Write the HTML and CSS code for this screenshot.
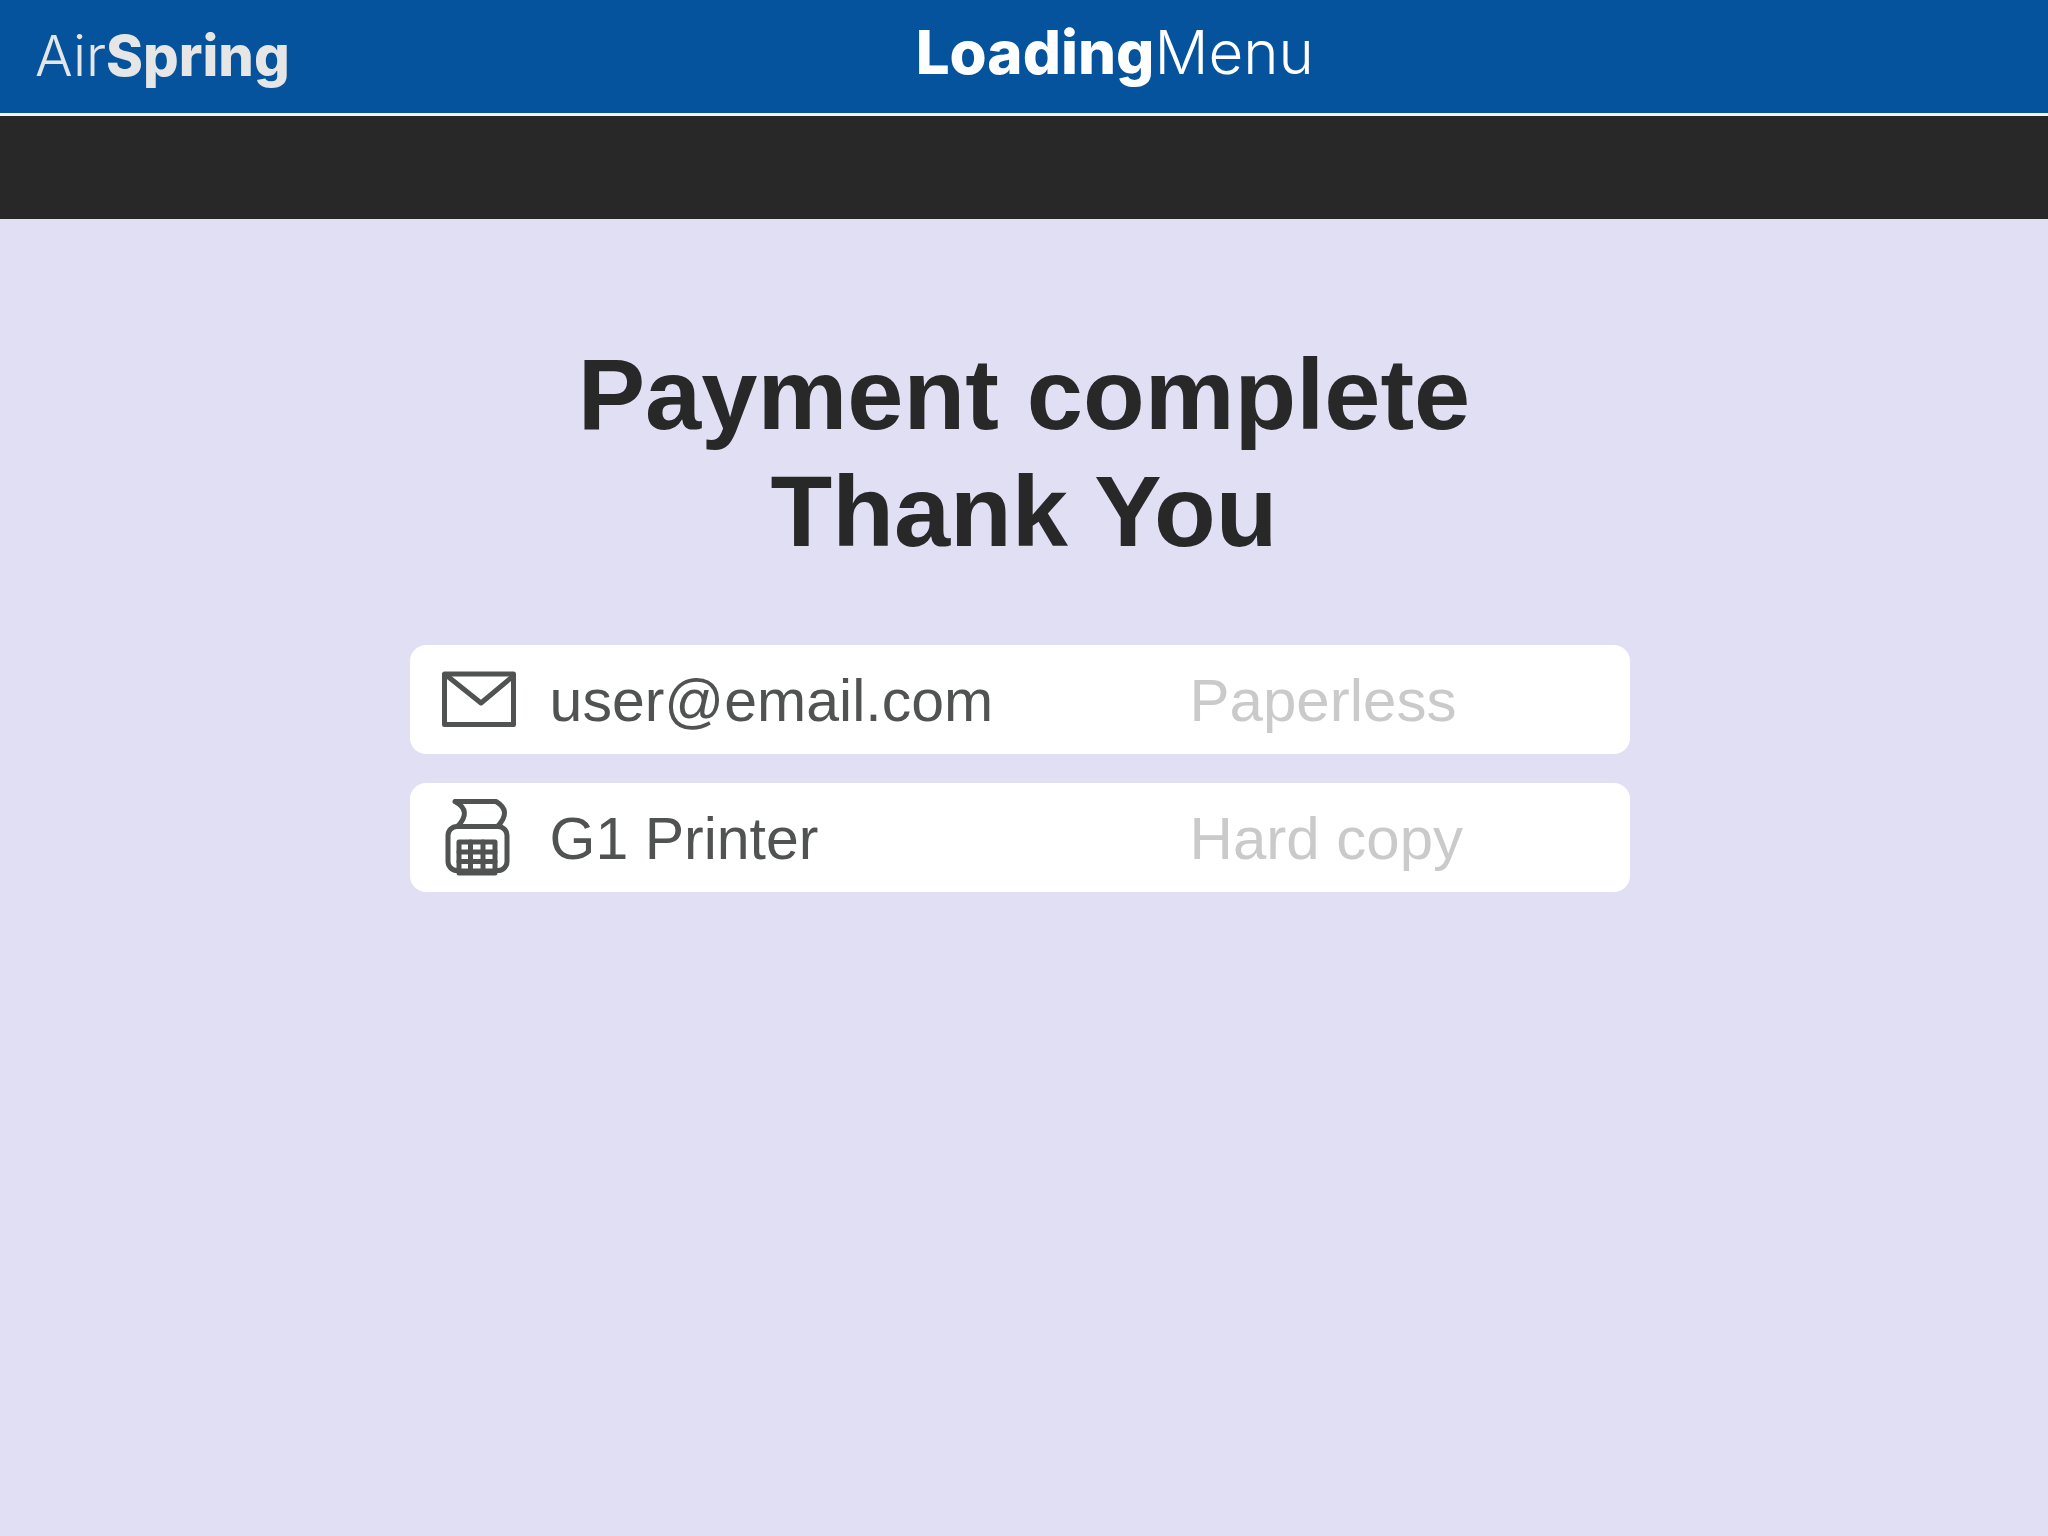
FILE: index.html
```html
<!DOCTYPE html>
<html lang="en">
<head>
  <meta charset="utf-8">
  <meta name="viewport" content="width=device-width, initial-scale=1">
  <title>AirSpring – Payment complete</title>
  <link rel="stylesheet" href="styles.css">
</head>
<body>
  <header class="topbar">
    <div class="brand"><span class="thin">Air</span><span class="heavy">Spring</span></div>
    <div class="product"><span class="heavy">Loading</span><span class="thin">Menu</span></div>
  </header>
  <div class="subbar"></div>
  <main class="content">
    <h1 class="message">Payment complete<br>Thank You</h1>
    <ul class="receipts">
      <li class="receipt">
        <svg class="icon" viewBox="0 0 80 80" aria-hidden="true">
          <rect x="6.500" y="15" width="69" height="50.500"/>
          <path d="M8 16L43 44L74 18"/>
        </svg>
        <span class="target">user@email.com</span>
        <span class="kind">Paperless</span>
      </li>
      <li class="receipt">
        <svg class="icon" viewBox="0 1 80 80" aria-hidden="true">
          <path d="M17 5.500H58C69 12 69 20 60 30M17 5.500C29 12 29 20 20 30"/>
          <rect x="10" y="30.500" width="59" height="44" rx="9"/>
          <rect class="keys" x="21" y="46" width="36" height="31"/>
          <path d="M21 56H57M21 65.500H57M21 75H57M32.500 46V76M45 46V76"/>
        </svg>
        <span class="target">G1 Printer</span>
        <span class="kind">Hard copy</span>
      </li>
    </ul>
  </main>
</body>
</html>
```

FILE: styles.css
```css
* {
  box-sizing: border-box;
}

body {
  margin: 0;
  min-height: 100vh;
  background: #e0dff3;
  color: #282828;
  font-family: "Liberation Sans", Arial, sans-serif;
}

.topbar {
  display: grid;
  grid-template-columns: 7fr 9fr;
  padding: 14px 0 23px 35px;
  background: #05539d;
  border-bottom: 3px solid #f4f4f4;
  font-family: Inter, "Liberation Sans", sans-serif;
  line-height: 76px;
}

.brand {
  padding-top: 8px;
  font-size: 56px;
  line-height: 68px;
  color: #e6e6e6;
}

.product {
  font-size: 60px;
  color: #fff;
}

.thin {
  font-weight: 300;
}

.heavy {
  font-weight: 800;
}

.subbar {
  height: 103px;
  background: #282828;
}

.content {
  padding: 117px 20% 0;
}

.message {
  margin: 0 0 75px;
  font-size: 101px;
  line-height: 117px;
  font-weight: 700;
  text-align: center;
}

.receipts {
  display: grid;
  gap: 29px;
  margin: 0;
  padding: 0 8px 0 0;
  list-style: none;
}

.receipt {
  display: grid;
  grid-template-columns: 80px 640px 1fr;
  align-items: center;
  padding: 12px 32px 13px 28px;
  border-radius: 16px;
  background: #fff;
  font-size: 60px;
  line-height: 80px;
}

.icon {
  width: 80px;
  height: 80px;
  fill: none;
  stroke: #515352;
  stroke-width: 5;
  stroke-linecap: round;
  stroke-linejoin: round;
}

.keys {
  fill: #fff;
}

.target {
  padding: 4px 0 0 32px;
  font-size: 59px;
  color: #515352;
}

.kind {
  padding: 4px 0 0 32px;
  color: #c9cac9;
}
```
